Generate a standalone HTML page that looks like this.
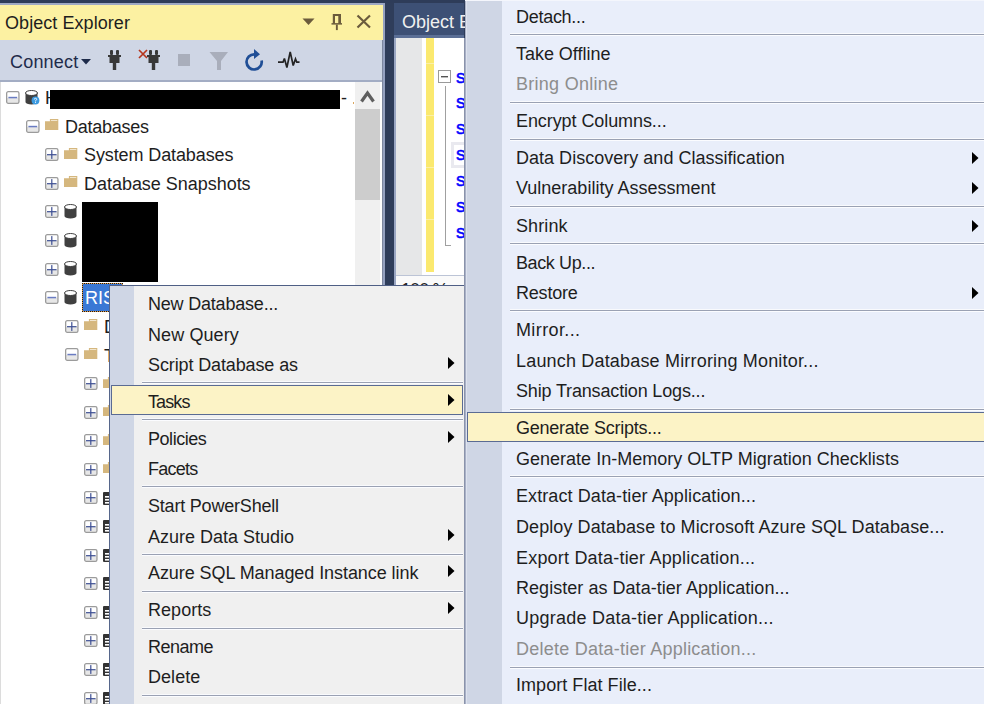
<!DOCTYPE html>
<html><head><meta charset="utf-8"><style>
html,body{margin:0;padding:0;width:984px;height:704px;overflow:hidden;background:#2b3a58;}
.t{position:absolute;font-family:"Liberation Sans", sans-serif;font-size:18px;line-height:20px;white-space:pre;}
.m{position:absolute;font-family:"Liberation Mono",monospace;font-size:19px;line-height:20px;color:#0000ff;font-weight:normal;-webkit-text-stroke:0.5px #0000ff;}
svg{display:block}
</style></head><body>
<div style="position:absolute;left:0px;top:0px;width:984px;height:704px;background:#2e3c59;"></div><div style="position:absolute;left:0px;top:3px;width:385px;height:2px;background:#9ea9c4;"></div><div style="position:absolute;left:0px;top:5px;width:383px;height:35px;background:#fcf1a2;"></div><div style="position:absolute;left:382px;top:40px;width:3px;height:664px;background:#95a1c0;"></div><div style="position:absolute;left:383px;top:3px;width:2px;height:37px;background:#95a1c0;"></div><div style="position:absolute;left:382px;top:40px;width:1px;height:664px;background:#7d879f;"></div><div class="t" style="left:5px;top:13px;color:#1e1e1e;letter-spacing:0.06px;">Object Explorer</div><svg style="position:absolute;left:302px;top:18px;" width="13" height="8" viewBox="0 0 13 8"><path d="M0.5 0.5 L12.5 0.5 L6.5 7 Z" fill="#6b5b3c"/></svg><svg style="position:absolute;left:331px;top:14px;" width="12" height="17" viewBox="0 0 12 17"><path fill-rule="evenodd" d="M1.8 0.1 H10 V9.7 H1.8 Z M4 2 V9.7 H7.3 V2 Z" fill="#6b5b3c"/><rect x="0.5" y="9.1" width="10.5" height="1.5" fill="#6b5b3c"/><rect x="4.9" y="10.5" width="1.9" height="5.6" fill="#6b5b3c"/></svg><svg style="position:absolute;left:356px;top:14px;" width="16" height="15" viewBox="0 0 16 15"><path d="M1.5 1.5 L14 13.5 M14 1.5 L1.5 13.5" stroke="#6b5b3c" stroke-width="2.2"/></svg><div style="position:absolute;left:0px;top:40px;width:382px;height:40px;background:#cfd6e5;"></div><div style="position:absolute;left:0px;top:80px;width:382px;height:2px;background:#a3adc4;"></div><div style="position:absolute;left:0px;top:82px;width:382px;height:622px;background:#ffffff;"></div><div style="position:absolute;left:0px;top:82px;width:1px;height:622px;background:#dcdcdc;"></div><div class="t" style="left:10px;top:52px;color:#1e2b4a;letter-spacing:0.2px;">Connect</div><svg style="position:absolute;left:81px;top:59px;" width="10" height="6" viewBox="0 0 10 6"><path d="M0 0 H10 L5 5.5 Z" fill="#1e2b4a"/></svg><svg style="position:absolute;left:108px;top:50px;" width="13" height="21" viewBox="0 0 13 21"><rect x="2" y="0" width="3" height="5" rx="1" fill="#383838"/><rect x="8" y="0" width="3" height="5" rx="1" fill="#383838"/><rect x="0" y="5" width="13" height="2" fill="#383838"/><rect x="1.5" y="6" width="10" height="7" fill="#383838"/><rect x="4.8" y="12" width="3.4" height="8" fill="#383838"/></svg><svg style="position:absolute;left:147px;top:50px;" width="13" height="21" viewBox="0 0 13 21"><rect x="2" y="0" width="3" height="5" rx="1" fill="#383838"/><rect x="8" y="0" width="3" height="5" rx="1" fill="#383838"/><rect x="0" y="5" width="13" height="2" fill="#383838"/><rect x="1.5" y="6" width="10" height="7" fill="#383838"/><rect x="4.8" y="12" width="3.4" height="8" fill="#383838"/></svg><svg style="position:absolute;left:138px;top:49px;" width="10" height="10" viewBox="0 0 10 10"><path d="M1 1 L9 9 M9 1 L1 9" stroke="#b5351d" stroke-width="1.7"/></svg><div style="position:absolute;left:178px;top:54px;width:12px;height:12px;background:#a9aebb;"></div><svg style="position:absolute;left:209px;top:51px;" width="20" height="20" viewBox="0 0 20 20"><path d="M0.5 1 H19 L12 10 V19 H8 V10 Z" fill="#a9aebb"/></svg><svg style="position:absolute;left:243px;top:47px;" width="22" height="25" viewBox="0 0 22 25"><path d="M18.6 13.5 A7.6 7.6 0 1 1 11.5 7.3" fill="none" stroke="#1f4e96" stroke-width="2.7"/><path d="M11 2 L17 7.2 L11 12 Z" fill="#1f4e96"/></svg><svg style="position:absolute;left:277px;top:50px;" width="24" height="20" viewBox="0 0 24 20"><path d="M1 12.2 H6 L7.4 8.5 L9.9 17.5 L13.2 1.9 L16.2 15.5 L18.5 8.9 L19.8 12.2 H22.5" fill="none" stroke="#242424" stroke-width="1.7" stroke-linejoin="miter" stroke-miterlimit="3"/></svg><div style="position:absolute;left:355px;top:82px;width:25px;height:622px;background:#f0f0f0;"></div><svg style="position:absolute;left:355px;top:82px;" width="25" height="27" viewBox="0 0 25 27"><path d="M6.5 19.5 L12.5 11 L18.5 19.5" fill="none" stroke="#5f5f5f" stroke-width="3.2"/></svg><div style="position:absolute;left:355px;top:109px;width:25px;height:91px;background:#cdcdcd;"></div><svg style="position:absolute;left:6px;top:91px;" width="14" height="13" viewBox="0 0 14 13"><rect x="1" y="7" width="11.6" height="5" fill="#e7e7e7"/><rect x="0.65" y="0.65" width="12.3" height="11.7" rx="1.6" fill="none" stroke="#9b9b9b" stroke-width="1.3"/><rect x="2.4" y="5.8" width="8.8" height="1.5" fill="#6a7cc2"/></svg><svg style="position:absolute;left:25px;top:90px;" width="13" height="15" viewBox="0 0 13 15"><path d="M0.5 3 V12 A6 2.5 0 0 0 12.5 12 V3 Z" fill="#404040"/><ellipse cx="6.5" cy="3" rx="6" ry="2.5" fill="#ffffff" stroke="#404040" stroke-width="1"/></svg><svg style="position:absolute;left:31px;top:96px;" width="9" height="9" viewBox="0 0 9 9"><circle cx="4.5" cy="4.5" r="3.9" fill="#3c9ae0"/><path d="M3.3 3.5 Q3.3 2.3 4.5 2.3 Q5.7 2.3 5.7 3.4 Q5.7 4.2 4.5 4.7 V5.4" fill="none" stroke="#fff" stroke-width="0.9"/><rect x="4.05" y="6" width="0.9" height="0.9" fill="#fff"/></svg><div class="t" style="left:45px;top:88px;color:#1e1e1e;">H</div><svg style="position:absolute;left:26px;top:120px;" width="14" height="13" viewBox="0 0 14 13"><rect x="1" y="7" width="11.6" height="5" fill="#e7e7e7"/><rect x="0.65" y="0.65" width="12.3" height="11.7" rx="1.6" fill="none" stroke="#9b9b9b" stroke-width="1.3"/><rect x="2.4" y="5.8" width="8.8" height="1.5" fill="#6a7cc2"/></svg><svg style="position:absolute;left:45px;top:119px;" width="14" height="12" viewBox="0 0 14 12"><path d="M0 2.2 H4.9 V0 H13.3 V11 H0 Z" fill="#d5b77e"/><rect x="5.9" y="1.1" width="6.4" height="0.9" fill="#f4ead6"/></svg><div class="t" style="left:65px;top:117px;color:#1e1e1e;letter-spacing:-0.25px;">Databases</div><svg style="position:absolute;left:45px;top:148px;" width="14" height="13" viewBox="0 0 14 13"><rect x="1" y="7" width="11.6" height="5" fill="#e7e7e7"/><rect x="0.65" y="0.65" width="12.3" height="11.7" rx="1.6" fill="none" stroke="#9b9b9b" stroke-width="1.3"/><rect x="2" y="6.1" width="9.6" height="1.2" fill="#3d4f93"/><rect x="6.2" y="2.1" width="1.2" height="8.8" fill="#3d4f93"/></svg><svg style="position:absolute;left:64px;top:148px;" width="14" height="12" viewBox="0 0 14 12"><path d="M0 2.2 H4.9 V0 H13.3 V11 H0 Z" fill="#d5b77e"/><rect x="5.9" y="1.1" width="6.4" height="0.9" fill="#f4ead6"/></svg><div class="t" style="left:84px;top:145px;color:#1e1e1e;letter-spacing:-0.11px;">System Databases</div><svg style="position:absolute;left:45px;top:177px;" width="14" height="13" viewBox="0 0 14 13"><rect x="1" y="7" width="11.6" height="5" fill="#e7e7e7"/><rect x="0.65" y="0.65" width="12.3" height="11.7" rx="1.6" fill="none" stroke="#9b9b9b" stroke-width="1.3"/><rect x="2" y="6.1" width="9.6" height="1.2" fill="#3d4f93"/><rect x="6.2" y="2.1" width="1.2" height="8.8" fill="#3d4f93"/></svg><svg style="position:absolute;left:64px;top:176px;" width="14" height="12" viewBox="0 0 14 12"><path d="M0 2.2 H4.9 V0 H13.3 V11 H0 Z" fill="#d5b77e"/><rect x="5.9" y="1.1" width="6.4" height="0.9" fill="#f4ead6"/></svg><div class="t" style="left:84px;top:174px;color:#1e1e1e;letter-spacing:-0.03px;">Database Snapshots</div><svg style="position:absolute;left:45px;top:205px;" width="14" height="13" viewBox="0 0 14 13"><rect x="1" y="7" width="11.6" height="5" fill="#e7e7e7"/><rect x="0.65" y="0.65" width="12.3" height="11.7" rx="1.6" fill="none" stroke="#9b9b9b" stroke-width="1.3"/><rect x="2" y="6.1" width="9.6" height="1.2" fill="#3d4f93"/><rect x="6.2" y="2.1" width="1.2" height="8.8" fill="#3d4f93"/></svg><svg style="position:absolute;left:64px;top:204px;" width="13" height="15" viewBox="0 0 13 15"><path d="M0.5 3 V12 A6 2.5 0 0 0 12.5 12 V3 Z" fill="#404040"/><ellipse cx="6.5" cy="3" rx="6" ry="2.5" fill="#ffffff" stroke="#404040" stroke-width="1"/></svg><svg style="position:absolute;left:45px;top:234px;" width="14" height="13" viewBox="0 0 14 13"><rect x="1" y="7" width="11.6" height="5" fill="#e7e7e7"/><rect x="0.65" y="0.65" width="12.3" height="11.7" rx="1.6" fill="none" stroke="#9b9b9b" stroke-width="1.3"/><rect x="2" y="6.1" width="9.6" height="1.2" fill="#3d4f93"/><rect x="6.2" y="2.1" width="1.2" height="8.8" fill="#3d4f93"/></svg><svg style="position:absolute;left:64px;top:233px;" width="13" height="15" viewBox="0 0 13 15"><path d="M0.5 3 V12 A6 2.5 0 0 0 12.5 12 V3 Z" fill="#404040"/><ellipse cx="6.5" cy="3" rx="6" ry="2.5" fill="#ffffff" stroke="#404040" stroke-width="1"/></svg><svg style="position:absolute;left:45px;top:263px;" width="14" height="13" viewBox="0 0 14 13"><rect x="1" y="7" width="11.6" height="5" fill="#e7e7e7"/><rect x="0.65" y="0.65" width="12.3" height="11.7" rx="1.6" fill="none" stroke="#9b9b9b" stroke-width="1.3"/><rect x="2" y="6.1" width="9.6" height="1.2" fill="#3d4f93"/><rect x="6.2" y="2.1" width="1.2" height="8.8" fill="#3d4f93"/></svg><svg style="position:absolute;left:64px;top:261px;" width="13" height="15" viewBox="0 0 13 15"><path d="M0.5 3 V12 A6 2.5 0 0 0 12.5 12 V3 Z" fill="#404040"/><ellipse cx="6.5" cy="3" rx="6" ry="2.5" fill="#ffffff" stroke="#404040" stroke-width="1"/></svg><svg style="position:absolute;left:45px;top:291px;" width="14" height="13" viewBox="0 0 14 13"><rect x="1" y="7" width="11.6" height="5" fill="#e7e7e7"/><rect x="0.65" y="0.65" width="12.3" height="11.7" rx="1.6" fill="none" stroke="#9b9b9b" stroke-width="1.3"/><rect x="2.4" y="5.8" width="8.8" height="1.5" fill="#6a7cc2"/></svg><svg style="position:absolute;left:64px;top:290px;" width="13" height="15" viewBox="0 0 13 15"><path d="M0.5 3 V12 A6 2.5 0 0 0 12.5 12 V3 Z" fill="#404040"/><ellipse cx="6.5" cy="3" rx="6" ry="2.5" fill="#ffffff" stroke="#404040" stroke-width="1"/></svg><div style="position:absolute;left:82px;top:283px;width:41px;height:29px;background:#e39a45;"></div><div style="position:absolute;left:82px;top:283px;width:41px;height:29px;background:#3a78d5;box-sizing:border-box;border:1px dotted #1c1c1c;background-clip:padding-box;"></div><div class="t" style="left:85px;top:288px;color:#ffffff;">RIS</div><svg style="position:absolute;left:65px;top:320px;" width="14" height="13" viewBox="0 0 14 13"><rect x="1" y="7" width="11.6" height="5" fill="#e7e7e7"/><rect x="0.65" y="0.65" width="12.3" height="11.7" rx="1.6" fill="none" stroke="#9b9b9b" stroke-width="1.3"/><rect x="2" y="6.1" width="9.6" height="1.2" fill="#3d4f93"/><rect x="6.2" y="2.1" width="1.2" height="8.8" fill="#3d4f93"/></svg><svg style="position:absolute;left:84px;top:319px;" width="14" height="12" viewBox="0 0 14 12"><path d="M0 2.2 H4.9 V0 H13.3 V11 H0 Z" fill="#d5b77e"/><rect x="5.9" y="1.1" width="6.4" height="0.9" fill="#f4ead6"/></svg><div class="t" style="left:104px;top:317px;color:#1e1e1e;">D</div><svg style="position:absolute;left:65px;top:348px;" width="14" height="13" viewBox="0 0 14 13"><rect x="1" y="7" width="11.6" height="5" fill="#e7e7e7"/><rect x="0.65" y="0.65" width="12.3" height="11.7" rx="1.6" fill="none" stroke="#9b9b9b" stroke-width="1.3"/><rect x="2.4" y="5.8" width="8.8" height="1.5" fill="#6a7cc2"/></svg><svg style="position:absolute;left:84px;top:348px;" width="14" height="12" viewBox="0 0 14 12"><path d="M0 2.2 H4.9 V0 H13.3 V11 H0 Z" fill="#d5b77e"/><rect x="5.9" y="1.1" width="6.4" height="0.9" fill="#f4ead6"/></svg><div class="t" style="left:104px;top:346px;color:#1e1e1e;">T</div><svg style="position:absolute;left:84px;top:377px;" width="14" height="13" viewBox="0 0 14 13"><rect x="1" y="7" width="11.6" height="5" fill="#e7e7e7"/><rect x="0.65" y="0.65" width="12.3" height="11.7" rx="1.6" fill="none" stroke="#9b9b9b" stroke-width="1.3"/><rect x="2" y="6.1" width="9.6" height="1.2" fill="#3d4f93"/><rect x="6.2" y="2.1" width="1.2" height="8.8" fill="#3d4f93"/></svg><svg style="position:absolute;left:103px;top:377px;" width="14" height="12" viewBox="0 0 14 12"><path d="M0 2.2 H4.9 V0 H13.3 V11 H0 Z" fill="#d5b77e"/><rect x="5.9" y="1.1" width="6.4" height="0.9" fill="#f4ead6"/></svg><svg style="position:absolute;left:84px;top:406px;" width="14" height="13" viewBox="0 0 14 13"><rect x="1" y="7" width="11.6" height="5" fill="#e7e7e7"/><rect x="0.65" y="0.65" width="12.3" height="11.7" rx="1.6" fill="none" stroke="#9b9b9b" stroke-width="1.3"/><rect x="2" y="6.1" width="9.6" height="1.2" fill="#3d4f93"/><rect x="6.2" y="2.1" width="1.2" height="8.8" fill="#3d4f93"/></svg><svg style="position:absolute;left:103px;top:405px;" width="14" height="12" viewBox="0 0 14 12"><path d="M0 2.2 H4.9 V0 H13.3 V11 H0 Z" fill="#d5b77e"/><rect x="5.9" y="1.1" width="6.4" height="0.9" fill="#f4ead6"/></svg><svg style="position:absolute;left:84px;top:434px;" width="14" height="13" viewBox="0 0 14 13"><rect x="1" y="7" width="11.6" height="5" fill="#e7e7e7"/><rect x="0.65" y="0.65" width="12.3" height="11.7" rx="1.6" fill="none" stroke="#9b9b9b" stroke-width="1.3"/><rect x="2" y="6.1" width="9.6" height="1.2" fill="#3d4f93"/><rect x="6.2" y="2.1" width="1.2" height="8.8" fill="#3d4f93"/></svg><svg style="position:absolute;left:103px;top:434px;" width="14" height="12" viewBox="0 0 14 12"><path d="M0 2.2 H4.9 V0 H13.3 V11 H0 Z" fill="#d5b77e"/><rect x="5.9" y="1.1" width="6.4" height="0.9" fill="#f4ead6"/></svg><svg style="position:absolute;left:84px;top:463px;" width="14" height="13" viewBox="0 0 14 13"><rect x="1" y="7" width="11.6" height="5" fill="#e7e7e7"/><rect x="0.65" y="0.65" width="12.3" height="11.7" rx="1.6" fill="none" stroke="#9b9b9b" stroke-width="1.3"/><rect x="2" y="6.1" width="9.6" height="1.2" fill="#3d4f93"/><rect x="6.2" y="2.1" width="1.2" height="8.8" fill="#3d4f93"/></svg><svg style="position:absolute;left:103px;top:462px;" width="14" height="12" viewBox="0 0 14 12"><path d="M0 2.2 H4.9 V0 H13.3 V11 H0 Z" fill="#d5b77e"/><rect x="5.9" y="1.1" width="6.4" height="0.9" fill="#f4ead6"/></svg><svg style="position:absolute;left:84px;top:491px;" width="14" height="13" viewBox="0 0 14 13"><rect x="1" y="7" width="11.6" height="5" fill="#e7e7e7"/><rect x="0.65" y="0.65" width="12.3" height="11.7" rx="1.6" fill="none" stroke="#9b9b9b" stroke-width="1.3"/><rect x="2" y="6.1" width="9.6" height="1.2" fill="#3d4f93"/><rect x="6.2" y="2.1" width="1.2" height="8.8" fill="#3d4f93"/></svg><svg style="position:absolute;left:103px;top:492px;" width="8" height="13" viewBox="0 0 8 13"><rect x="0" y="0" width="8" height="13" rx="1" fill="#333"/><rect x="2" y="4" width="4" height="1.6" fill="#fff"/><rect x="2" y="7" width="4" height="1.6" fill="#fff"/><rect x="2" y="10" width="4" height="1.6" fill="#fff"/></svg><svg style="position:absolute;left:84px;top:520px;" width="14" height="13" viewBox="0 0 14 13"><rect x="1" y="7" width="11.6" height="5" fill="#e7e7e7"/><rect x="0.65" y="0.65" width="12.3" height="11.7" rx="1.6" fill="none" stroke="#9b9b9b" stroke-width="1.3"/><rect x="2" y="6.1" width="9.6" height="1.2" fill="#3d4f93"/><rect x="6.2" y="2.1" width="1.2" height="8.8" fill="#3d4f93"/></svg><svg style="position:absolute;left:103px;top:520px;" width="8" height="13" viewBox="0 0 8 13"><rect x="0" y="0" width="8" height="13" rx="1" fill="#333"/><rect x="2" y="4" width="4" height="1.6" fill="#fff"/><rect x="2" y="7" width="4" height="1.6" fill="#fff"/><rect x="2" y="10" width="4" height="1.6" fill="#fff"/></svg><svg style="position:absolute;left:84px;top:549px;" width="14" height="13" viewBox="0 0 14 13"><rect x="1" y="7" width="11.6" height="5" fill="#e7e7e7"/><rect x="0.65" y="0.65" width="12.3" height="11.7" rx="1.6" fill="none" stroke="#9b9b9b" stroke-width="1.3"/><rect x="2" y="6.1" width="9.6" height="1.2" fill="#3d4f93"/><rect x="6.2" y="2.1" width="1.2" height="8.8" fill="#3d4f93"/></svg><svg style="position:absolute;left:103px;top:549px;" width="8" height="13" viewBox="0 0 8 13"><rect x="0" y="0" width="8" height="13" rx="1" fill="#333"/><rect x="2" y="4" width="4" height="1.6" fill="#fff"/><rect x="2" y="7" width="4" height="1.6" fill="#fff"/><rect x="2" y="10" width="4" height="1.6" fill="#fff"/></svg><svg style="position:absolute;left:84px;top:577px;" width="14" height="13" viewBox="0 0 14 13"><rect x="1" y="7" width="11.6" height="5" fill="#e7e7e7"/><rect x="0.65" y="0.65" width="12.3" height="11.7" rx="1.6" fill="none" stroke="#9b9b9b" stroke-width="1.3"/><rect x="2" y="6.1" width="9.6" height="1.2" fill="#3d4f93"/><rect x="6.2" y="2.1" width="1.2" height="8.8" fill="#3d4f93"/></svg><svg style="position:absolute;left:103px;top:577px;" width="8" height="13" viewBox="0 0 8 13"><rect x="0" y="0" width="8" height="13" rx="1" fill="#333"/><rect x="2" y="4" width="4" height="1.6" fill="#fff"/><rect x="2" y="7" width="4" height="1.6" fill="#fff"/><rect x="2" y="10" width="4" height="1.6" fill="#fff"/></svg><svg style="position:absolute;left:84px;top:606px;" width="14" height="13" viewBox="0 0 14 13"><rect x="1" y="7" width="11.6" height="5" fill="#e7e7e7"/><rect x="0.65" y="0.65" width="12.3" height="11.7" rx="1.6" fill="none" stroke="#9b9b9b" stroke-width="1.3"/><rect x="2" y="6.1" width="9.6" height="1.2" fill="#3d4f93"/><rect x="6.2" y="2.1" width="1.2" height="8.8" fill="#3d4f93"/></svg><svg style="position:absolute;left:103px;top:606px;" width="8" height="13" viewBox="0 0 8 13"><rect x="0" y="0" width="8" height="13" rx="1" fill="#333"/><rect x="2" y="4" width="4" height="1.6" fill="#fff"/><rect x="2" y="7" width="4" height="1.6" fill="#fff"/><rect x="2" y="10" width="4" height="1.6" fill="#fff"/></svg><svg style="position:absolute;left:84px;top:634px;" width="14" height="13" viewBox="0 0 14 13"><rect x="1" y="7" width="11.6" height="5" fill="#e7e7e7"/><rect x="0.65" y="0.65" width="12.3" height="11.7" rx="1.6" fill="none" stroke="#9b9b9b" stroke-width="1.3"/><rect x="2" y="6.1" width="9.6" height="1.2" fill="#3d4f93"/><rect x="6.2" y="2.1" width="1.2" height="8.8" fill="#3d4f93"/></svg><svg style="position:absolute;left:103px;top:634px;" width="8" height="13" viewBox="0 0 8 13"><rect x="0" y="0" width="8" height="13" rx="1" fill="#333"/><rect x="2" y="4" width="4" height="1.6" fill="#fff"/><rect x="2" y="7" width="4" height="1.6" fill="#fff"/><rect x="2" y="10" width="4" height="1.6" fill="#fff"/></svg><svg style="position:absolute;left:84px;top:663px;" width="14" height="13" viewBox="0 0 14 13"><rect x="1" y="7" width="11.6" height="5" fill="#e7e7e7"/><rect x="0.65" y="0.65" width="12.3" height="11.7" rx="1.6" fill="none" stroke="#9b9b9b" stroke-width="1.3"/><rect x="2" y="6.1" width="9.6" height="1.2" fill="#3d4f93"/><rect x="6.2" y="2.1" width="1.2" height="8.8" fill="#3d4f93"/></svg><svg style="position:absolute;left:103px;top:663px;" width="8" height="13" viewBox="0 0 8 13"><rect x="0" y="0" width="8" height="13" rx="1" fill="#333"/><rect x="2" y="4" width="4" height="1.6" fill="#fff"/><rect x="2" y="7" width="4" height="1.6" fill="#fff"/><rect x="2" y="10" width="4" height="1.6" fill="#fff"/></svg><svg style="position:absolute;left:84px;top:692px;" width="14" height="13" viewBox="0 0 14 13"><rect x="1" y="7" width="11.6" height="5" fill="#e7e7e7"/><rect x="0.65" y="0.65" width="12.3" height="11.7" rx="1.6" fill="none" stroke="#9b9b9b" stroke-width="1.3"/><rect x="2" y="6.1" width="9.6" height="1.2" fill="#3d4f93"/><rect x="6.2" y="2.1" width="1.2" height="8.8" fill="#3d4f93"/></svg><svg style="position:absolute;left:103px;top:692px;" width="8" height="13" viewBox="0 0 8 13"><rect x="0" y="0" width="8" height="13" rx="1" fill="#333"/><rect x="2" y="4" width="4" height="1.6" fill="#fff"/><rect x="2" y="7" width="4" height="1.6" fill="#fff"/><rect x="2" y="10" width="4" height="1.6" fill="#fff"/></svg><div style="position:absolute;left:50px;top:90px;width:290px;height:19px;background:#000000;"></div><div class="t" style="left:341px;top:88px;color:#1e1e1e;">-</div><div style="position:absolute;left:353px;top:102px;width:1px;height:2px;background:#d9a55e;"></div><div style="position:absolute;left:82px;top:202px;width:76px;height:80px;background:#000000;"></div><div style="position:absolute;left:385px;top:3px;width:9px;height:701px;background:#2f3d5a;"></div><div style="position:absolute;left:394px;top:3px;width:70px;height:32px;background:#3d5075;"></div><div class="t" style="left:402px;top:12px;color:#f0f0f0;">Object E</div><div style="position:absolute;left:394px;top:35px;width:70px;height:3px;background:#5b6f96;"></div><div style="position:absolute;left:394px;top:38px;width:2px;height:247px;background:#9aa6c2;"></div><div style="position:absolute;left:396px;top:38px;width:68px;height:237px;background:#ffffff;"></div><div style="position:absolute;left:396px;top:38px;width:26px;height:237px;background:#e6e7e8;"></div><div style="position:absolute;left:426px;top:38px;width:8px;height:234px;background:#fbe96f;"></div><div style="position:absolute;left:426px;top:63px;width:8px;height:1px;background:#fcf0a8;"></div><div style="position:absolute;left:426px;top:115px;width:8px;height:1px;background:#fcf0a8;"></div><div style="position:absolute;left:426px;top:167px;width:8px;height:1px;background:#fcf0a8;"></div><div style="position:absolute;left:426px;top:219px;width:8px;height:1px;background:#fcf0a8;"></div><svg style="position:absolute;left:438px;top:70px;" width="14" height="14" viewBox="0 0 14 14"><rect x="0.5" y="0.5" width="12" height="12" fill="#fff" stroke="#9a9a9a"/><rect x="3" y="6" width="7" height="1.4" fill="#555"/></svg><div style="position:absolute;left:445px;top:86px;width:1px;height:160px;background:#a0a0a0;"></div><div style="position:absolute;left:445px;top:245px;width:6px;height:1px;background:#a0a0a0;"></div><div style="position:absolute;left:451px;top:142px;width:20px;height:26px;background:transparent;box-sizing:border-box;border:3px solid #e9e9ef;"></div><div class="m" style="left:455px;top:68px;">s</div><div class="m" style="left:455px;top:93px;">s</div><div class="m" style="left:455px;top:119px;">s</div><div class="m" style="left:455px;top:145px;">s</div><div class="m" style="left:455px;top:171px;">s</div><div class="m" style="left:455px;top:197px;">s</div><div class="m" style="left:455px;top:223px;">s</div><div style="position:absolute;left:396px;top:275px;width:68px;height:1px;background:#bcc4d6;"></div><div style="position:absolute;left:396px;top:276px;width:68px;height:9px;background:#fafafa;"></div><div style="position:absolute;left:396px;top:276px;width:68px;height:9px;overflow:hidden"><div class="t" style="left:5px;top:4px;color:#1e1e1e;font-size:18px;letter-spacing:-0.9px">100 %</div></div><div style="position:absolute;left:109px;top:285px;width:357px;height:419px;background:#f0f0f0;box-sizing:border-box;border-left:1px solid #56668b;border-top:1px solid #4f5f85;border-right:0;"></div><div style="position:absolute;left:110px;top:286px;width:24px;height:418px;background:#cfd6e5;"></div><div style="position:absolute;left:464px;top:38px;width:1px;height:666px;background:#8a93ab;"></div><div style="position:absolute;left:465px;top:0px;width:519px;height:704px;background:#e9eefa;"></div><div style="position:absolute;left:465px;top:0px;width:1px;height:704px;background:#a9b1c6;"></div><div style="position:absolute;left:466px;top:0px;width:1px;height:704px;background:#dde2ee;"></div><div style="position:absolute;left:467px;top:0px;width:35px;height:704px;background:#cfd6e5;"></div><div style="position:absolute;left:465px;top:0px;width:519px;height:1px;background:#f4f6fc;"></div><div class="t" style="left:148px;top:294px;color:#1e1e1e;letter-spacing:-0.2px;">New Database...</div><div class="t" style="left:148px;top:325px;color:#1e1e1e;letter-spacing:0.1px;">New Query</div><div class="t" style="left:148px;top:355px;color:#1e1e1e;letter-spacing:-0.12px;">Script Database as</div><svg style="position:absolute;left:448px;top:357px;" width="7" height="12" viewBox="0 0 7 12"><path d="M0 0 L6.5 6 L0 12 Z" fill="#000"/></svg><div style="position:absolute;left:142px;top:381px;width:321px;height:1px;background:#f9fafd;"></div><div style="position:absolute;left:142px;top:382px;width:321px;height:1px;background:#9aa1b3;"></div><div style="position:absolute;left:142px;top:383px;width:321px;height:1px;background:#fbfcff;"></div><div style="position:absolute;left:111px;top:385px;width:352px;height:30px;background:#fcf3c6;box-sizing:border-box;border:1px solid #5a6b93;"></div><div class="t" style="left:148px;top:392px;color:#1e1e1e;letter-spacing:-0.9px;">Tasks</div><svg style="position:absolute;left:448px;top:394px;" width="7" height="12" viewBox="0 0 7 12"><path d="M0 0 L6.5 6 L0 12 Z" fill="#000"/></svg><div style="position:absolute;left:142px;top:418px;width:321px;height:1px;background:#f9fafd;"></div><div style="position:absolute;left:142px;top:419px;width:321px;height:1px;background:#9aa1b3;"></div><div style="position:absolute;left:142px;top:420px;width:321px;height:1px;background:#fbfcff;"></div><div class="t" style="left:148px;top:429px;color:#1e1e1e;letter-spacing:-0.45px;">Policies</div><svg style="position:absolute;left:448px;top:431px;" width="7" height="12" viewBox="0 0 7 12"><path d="M0 0 L6.5 6 L0 12 Z" fill="#000"/></svg><div class="t" style="left:148px;top:459px;color:#1e1e1e;letter-spacing:-0.75px;">Facets</div><div style="position:absolute;left:142px;top:485px;width:321px;height:1px;background:#f9fafd;"></div><div style="position:absolute;left:142px;top:486px;width:321px;height:1px;background:#9aa1b3;"></div><div style="position:absolute;left:142px;top:487px;width:321px;height:1px;background:#fbfcff;"></div><div class="t" style="left:148px;top:496px;color:#1e1e1e;letter-spacing:-0.2px;">Start PowerShell</div><div class="t" style="left:148px;top:527px;color:#1e1e1e;">Azure Data Studio</div><svg style="position:absolute;left:448px;top:529px;" width="7" height="12" viewBox="0 0 7 12"><path d="M0 0 L6.5 6 L0 12 Z" fill="#000"/></svg><div style="position:absolute;left:142px;top:553px;width:321px;height:1px;background:#f9fafd;"></div><div style="position:absolute;left:142px;top:554px;width:321px;height:1px;background:#9aa1b3;"></div><div style="position:absolute;left:142px;top:555px;width:321px;height:1px;background:#fbfcff;"></div><div class="t" style="left:148px;top:563px;color:#1e1e1e;letter-spacing:-0.07px;">Azure SQL Managed Instance link</div><svg style="position:absolute;left:448px;top:565px;" width="7" height="12" viewBox="0 0 7 12"><path d="M0 0 L6.5 6 L0 12 Z" fill="#000"/></svg><div style="position:absolute;left:142px;top:590px;width:321px;height:1px;background:#f9fafd;"></div><div style="position:absolute;left:142px;top:591px;width:321px;height:1px;background:#9aa1b3;"></div><div style="position:absolute;left:142px;top:592px;width:321px;height:1px;background:#fbfcff;"></div><div class="t" style="left:148px;top:600px;color:#1e1e1e;letter-spacing:0.05px;">Reports</div><svg style="position:absolute;left:448px;top:602px;" width="7" height="12" viewBox="0 0 7 12"><path d="M0 0 L6.5 6 L0 12 Z" fill="#000"/></svg><div style="position:absolute;left:142px;top:627px;width:321px;height:1px;background:#f9fafd;"></div><div style="position:absolute;left:142px;top:628px;width:321px;height:1px;background:#9aa1b3;"></div><div style="position:absolute;left:142px;top:629px;width:321px;height:1px;background:#fbfcff;"></div><div class="t" style="left:148px;top:637px;color:#1e1e1e;letter-spacing:-0.5px;">Rename</div><div class="t" style="left:148px;top:667px;color:#1e1e1e;letter-spacing:0.05px;">Delete</div><div style="position:absolute;left:142px;top:694px;width:321px;height:1px;background:#f9fafd;"></div><div style="position:absolute;left:142px;top:695px;width:321px;height:1px;background:#9aa1b3;"></div><div style="position:absolute;left:142px;top:696px;width:321px;height:1px;background:#fbfcff;"></div><div class="t" style="left:516px;top:7px;color:#1e1e1e;letter-spacing:-0.28px;">Detach...</div><div style="position:absolute;left:510px;top:33px;width:474px;height:1px;background:#f9fafd;"></div><div style="position:absolute;left:510px;top:34px;width:474px;height:1px;background:#9aa1b3;"></div><div style="position:absolute;left:510px;top:35px;width:474px;height:1px;background:#fbfcff;"></div><div class="t" style="left:516px;top:44px;color:#1e1e1e;letter-spacing:-0.03px;">Take Offline</div><div class="t" style="left:516px;top:74px;color:#8d8d8d;letter-spacing:0.27px;">Bring Online</div><div style="position:absolute;left:510px;top:101px;width:474px;height:1px;background:#f9fafd;"></div><div style="position:absolute;left:510px;top:102px;width:474px;height:1px;background:#9aa1b3;"></div><div style="position:absolute;left:510px;top:103px;width:474px;height:1px;background:#fbfcff;"></div><div class="t" style="left:516px;top:111px;color:#1e1e1e;letter-spacing:-0.08px;">Encrypt Columns...</div><div style="position:absolute;left:510px;top:138px;width:474px;height:1px;background:#f9fafd;"></div><div style="position:absolute;left:510px;top:139px;width:474px;height:1px;background:#9aa1b3;"></div><div style="position:absolute;left:510px;top:140px;width:474px;height:1px;background:#fbfcff;"></div><div class="t" style="left:516px;top:148px;color:#1e1e1e;letter-spacing:0.02px;">Data Discovery and Classification</div><svg style="position:absolute;left:972px;top:152px;" width="7" height="12" viewBox="0 0 7 12"><path d="M0 0 L6.5 6 L0 12 Z" fill="#000"/></svg><div class="t" style="left:516px;top:178px;color:#1e1e1e;">Vulnerability Assessment</div><svg style="position:absolute;left:972px;top:182px;" width="7" height="12" viewBox="0 0 7 12"><path d="M0 0 L6.5 6 L0 12 Z" fill="#000"/></svg><div style="position:absolute;left:510px;top:205px;width:474px;height:1px;background:#f9fafd;"></div><div style="position:absolute;left:510px;top:206px;width:474px;height:1px;background:#9aa1b3;"></div><div style="position:absolute;left:510px;top:207px;width:474px;height:1px;background:#fbfcff;"></div><div class="t" style="left:516px;top:216px;color:#1e1e1e;letter-spacing:0.1px;">Shrink</div><svg style="position:absolute;left:972px;top:220px;" width="7" height="12" viewBox="0 0 7 12"><path d="M0 0 L6.5 6 L0 12 Z" fill="#000"/></svg><div style="position:absolute;left:510px;top:242px;width:474px;height:1px;background:#f9fafd;"></div><div style="position:absolute;left:510px;top:243px;width:474px;height:1px;background:#9aa1b3;"></div><div style="position:absolute;left:510px;top:244px;width:474px;height:1px;background:#fbfcff;"></div><div class="t" style="left:516px;top:253px;color:#1e1e1e;letter-spacing:-0.39px;">Back Up...</div><div class="t" style="left:516px;top:283px;color:#1e1e1e;letter-spacing:-0.2px;">Restore</div><svg style="position:absolute;left:972px;top:287px;" width="7" height="12" viewBox="0 0 7 12"><path d="M0 0 L6.5 6 L0 12 Z" fill="#000"/></svg><div style="position:absolute;left:510px;top:309px;width:474px;height:1px;background:#f9fafd;"></div><div style="position:absolute;left:510px;top:310px;width:474px;height:1px;background:#9aa1b3;"></div><div style="position:absolute;left:510px;top:311px;width:474px;height:1px;background:#fbfcff;"></div><div class="t" style="left:516px;top:320px;color:#1e1e1e;letter-spacing:0.38px;">Mirror...</div><div class="t" style="left:516px;top:351px;color:#1e1e1e;letter-spacing:0.18px;">Launch Database Mirroring Monitor...</div><div class="t" style="left:516px;top:381px;color:#1e1e1e;letter-spacing:-0.16px;">Ship Transaction Logs...</div><div style="position:absolute;left:510px;top:408px;width:474px;height:1px;background:#f9fafd;"></div><div style="position:absolute;left:510px;top:409px;width:474px;height:1px;background:#9aa1b3;"></div><div style="position:absolute;left:510px;top:410px;width:474px;height:1px;background:#fbfcff;"></div><div style="position:absolute;left:467px;top:412px;width:523px;height:30px;background:#fcf3c6;box-sizing:border-box;border:1px solid #5a6b93;"></div><div class="t" style="left:516px;top:418px;color:#1e1e1e;letter-spacing:-0.24px;">Generate Scripts...</div><div class="t" style="left:516px;top:449px;color:#1e1e1e;letter-spacing:0.01px;">Generate In-Memory OLTP Migration Checklists</div><div style="position:absolute;left:510px;top:475px;width:474px;height:1px;background:#f9fafd;"></div><div style="position:absolute;left:510px;top:476px;width:474px;height:1px;background:#9aa1b3;"></div><div style="position:absolute;left:510px;top:477px;width:474px;height:1px;background:#fbfcff;"></div><div class="t" style="left:516px;top:486px;color:#1e1e1e;letter-spacing:0.09px;">Extract Data-tier Application...</div><div class="t" style="left:516px;top:517px;color:#1e1e1e;letter-spacing:0.08px;">Deploy Database to Microsoft Azure SQL Database...</div><div class="t" style="left:516px;top:548px;color:#1e1e1e;letter-spacing:0.2px;">Export Data-tier Application...</div><div class="t" style="left:516px;top:578px;color:#1e1e1e;letter-spacing:0.04px;">Register as Data-tier Application...</div><div class="t" style="left:516px;top:608px;color:#1e1e1e;letter-spacing:0.24px;">Upgrade Data-tier Application...</div><div class="t" style="left:516px;top:639px;color:#8d8d8d;letter-spacing:0.24px;">Delete Data-tier Application...</div><div style="position:absolute;left:510px;top:666px;width:474px;height:1px;background:#f9fafd;"></div><div style="position:absolute;left:510px;top:667px;width:474px;height:1px;background:#9aa1b3;"></div><div style="position:absolute;left:510px;top:668px;width:474px;height:1px;background:#fbfcff;"></div><div class="t" style="left:516px;top:675px;color:#1e1e1e;letter-spacing:0.05px;">Import Flat File...</div>
</body></html>
